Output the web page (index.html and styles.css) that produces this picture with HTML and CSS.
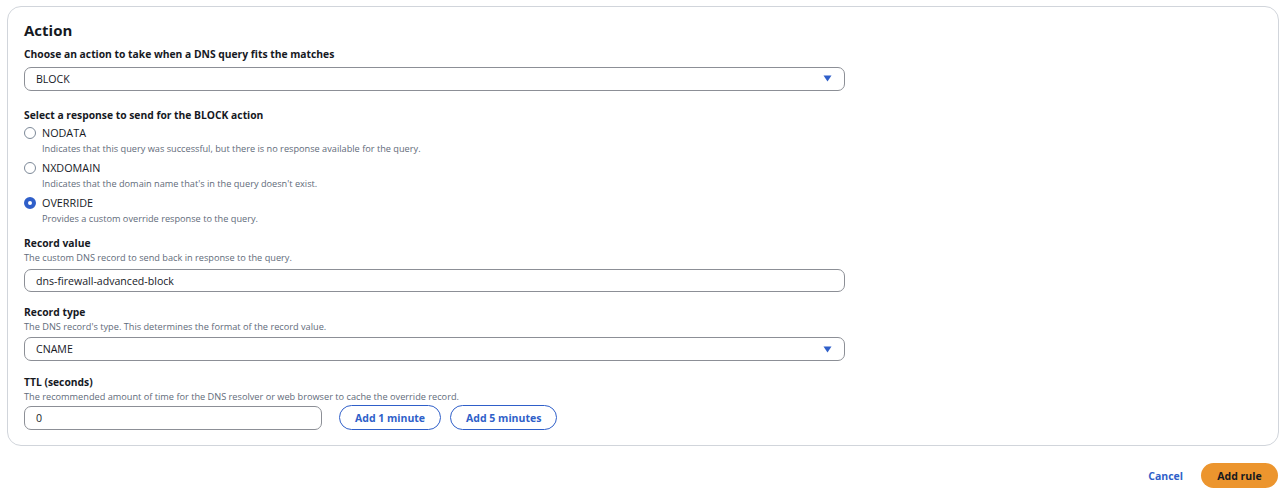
FILE: index.html
```html
<!DOCTYPE html>
<html lang="en">
<head>
<meta charset="utf-8">
<title>Action</title>
<link rel="stylesheet" href="styles.css">
</head>
<body>
<div class="panel">
  <h2 class="heading">Action</h2>

  <div class="label label-first">Choose an action to take when a DNS query fits the matches</div>
  <div class="select field-wide select-first">
    <span class="select-value">BLOCK</span>
    <svg class="caret" width="9" height="7" viewBox="0 0 9 7"><path d="M0.5 0.5 H8.5 L4.5 6.5 Z" fill="#2f5fc9"/></svg>
  </div>

  <div class="label label-group">Select a response to send for the BLOCK action</div>
  <div class="radio-group">
    <div class="radio-option">
      <div class="radio-row"><span class="radio"></span><span class="radio-title">NODATA</span></div>
      <div class="radio-desc">Indicates that this query was successful, but there is no response available for the query.</div>
    </div>
    <div class="radio-option">
      <div class="radio-row"><span class="radio"></span><span class="radio-title">NXDOMAIN</span></div>
      <div class="radio-desc">Indicates that the domain name that's in the query doesn't exist.</div>
    </div>
    <div class="radio-option">
      <div class="radio-row"><span class="radio radio-checked"></span><span class="radio-title">OVERRIDE</span></div>
      <div class="radio-desc">Provides a custom override response to the query.</div>
    </div>
  </div>

  <div class="label label-value">Record value</div>
  <div class="desc">The custom DNS record to send back in response to the query.</div>
  <div class="input field-wide input-value">dns-firewall-advanced-block</div>

  <div class="label label-type">Record type</div>
  <div class="desc">The DNS record's type. This determines the format of the record value.</div>
  <div class="select field-wide select-type">
    <span class="select-value">CNAME</span>
    <svg class="caret" width="9" height="7" viewBox="0 0 9 7"><path d="M0.5 0.5 H8.5 L4.5 6.5 Z" fill="#2f5fc9"/></svg>
  </div>

  <div class="label label-ttl">TTL (seconds)</div>
  <div class="desc">The recommended amount of time for the DNS resolver or web browser to cache the override record.</div>
  <div class="ttl-row">
    <div class="input field-ttl">0</div>
    <button class="btn-normal">Add 1 minute</button>
    <button class="btn-normal">Add 5 minutes</button>
  </div>
</div>

<div class="footer">
  <button class="btn-link">Cancel</button>
  <button class="btn-primary">Add rule</button>
</div>
</body>
</html>
```
FILE: styles.css
```css
* { box-sizing: border-box; }

body {
  margin: 0;
  background: #ffffff;
  font-family: "Open Sans", "Noto Sans", sans-serif;
  color: #16191f;
}

.panel {
  margin: 6px 8px 0 7px;
  height: 440px;
  border: 1px solid #d1d5db;
  border-radius: 14px;
  padding: 13px 16px 15px 16px;
  display: flex;
  flex-direction: column;
  align-items: flex-start;
}

.heading {
  margin: 0;
  font-size: 15px;
  line-height: 20px;
  font-weight: 700;
}

.label {
  font-size: 10.3px;
  line-height: 16px;
  font-weight: 700;
}
.label-first { margin-top: 6px; }
.label-group { margin-top: 16px; }
.label-value { margin-top: 10px; }
.label-type { margin-top: 12px; }
.label-ttl { margin-top: 13px; }

.desc, .radio-desc {
  font-size: 9.2px;
  line-height: 13px;
  color: #5f6b7a;
}

.field-wide { width: 821px; }

.select, .input {
  height: 24px;
  border: 1.5px solid #8c8f96;
  border-radius: 7px;
  padding: 0 11px;
  font-size: 10.6px;
  display: flex;
  align-items: center;
}

.select-first { margin-top: 5px; }
.input-value { margin-top: 5px; }
.select-type { margin-top: 4px; }

.select { justify-content: space-between; }
.caret { margin-right: 1px; }

.radio-group {
  display: flex;
  flex-direction: column;
  gap: 5px;
  margin-top: 2px;
}

.radio-row {
  display: flex;
  align-items: center;
  height: 16px;
  gap: 6px;
}

.radio {
  width: 12px;
  height: 12px;
  border: 1.5px solid #7d8998;
  border-radius: 50%;
}
.radio-checked {
  border: 4px solid #2f5fc9;
  background: #ffffff;
}

.radio-title {
  font-size: 10.8px;
  line-height: 16px;
}

.radio-desc {
  margin-left: 18px;
  margin-top: 1px;
}

.ttl-row {
  display: flex;
  align-items: center;
  margin-top: 2px;
}
.field-ttl { width: 298px; }

.btn-normal {
  height: 25px;
  border: 1.5px solid #2f5fc9;
  border-radius: 13px;
  background: #ffffff;
  color: #2f5fc9;
  font-family: inherit;
  font-size: 10.5px;
  font-weight: 700;
  padding: 0 15px;
  margin-left: 17px;
}
.btn-normal + .btn-normal { margin-left: 9px; }

.footer {
  display: flex;
  justify-content: flex-end;
  align-items: center;
  gap: 18px;
  margin: 17px 9px 0 0;
}

.btn-link {
  border: 0;
  background: none;
  color: #2f5fc9;
  font-family: inherit;
  font-size: 10.5px;
  font-weight: 700;
  padding: 0;
}

.btn-primary {
  height: 25px;
  width: 77px;
  border: 0;
  border-radius: 13px;
  background: #ec952e;
  color: #16191f;
  font-family: inherit;
  font-size: 10.5px;
  font-weight: 700;
  padding: 0;
}
```
